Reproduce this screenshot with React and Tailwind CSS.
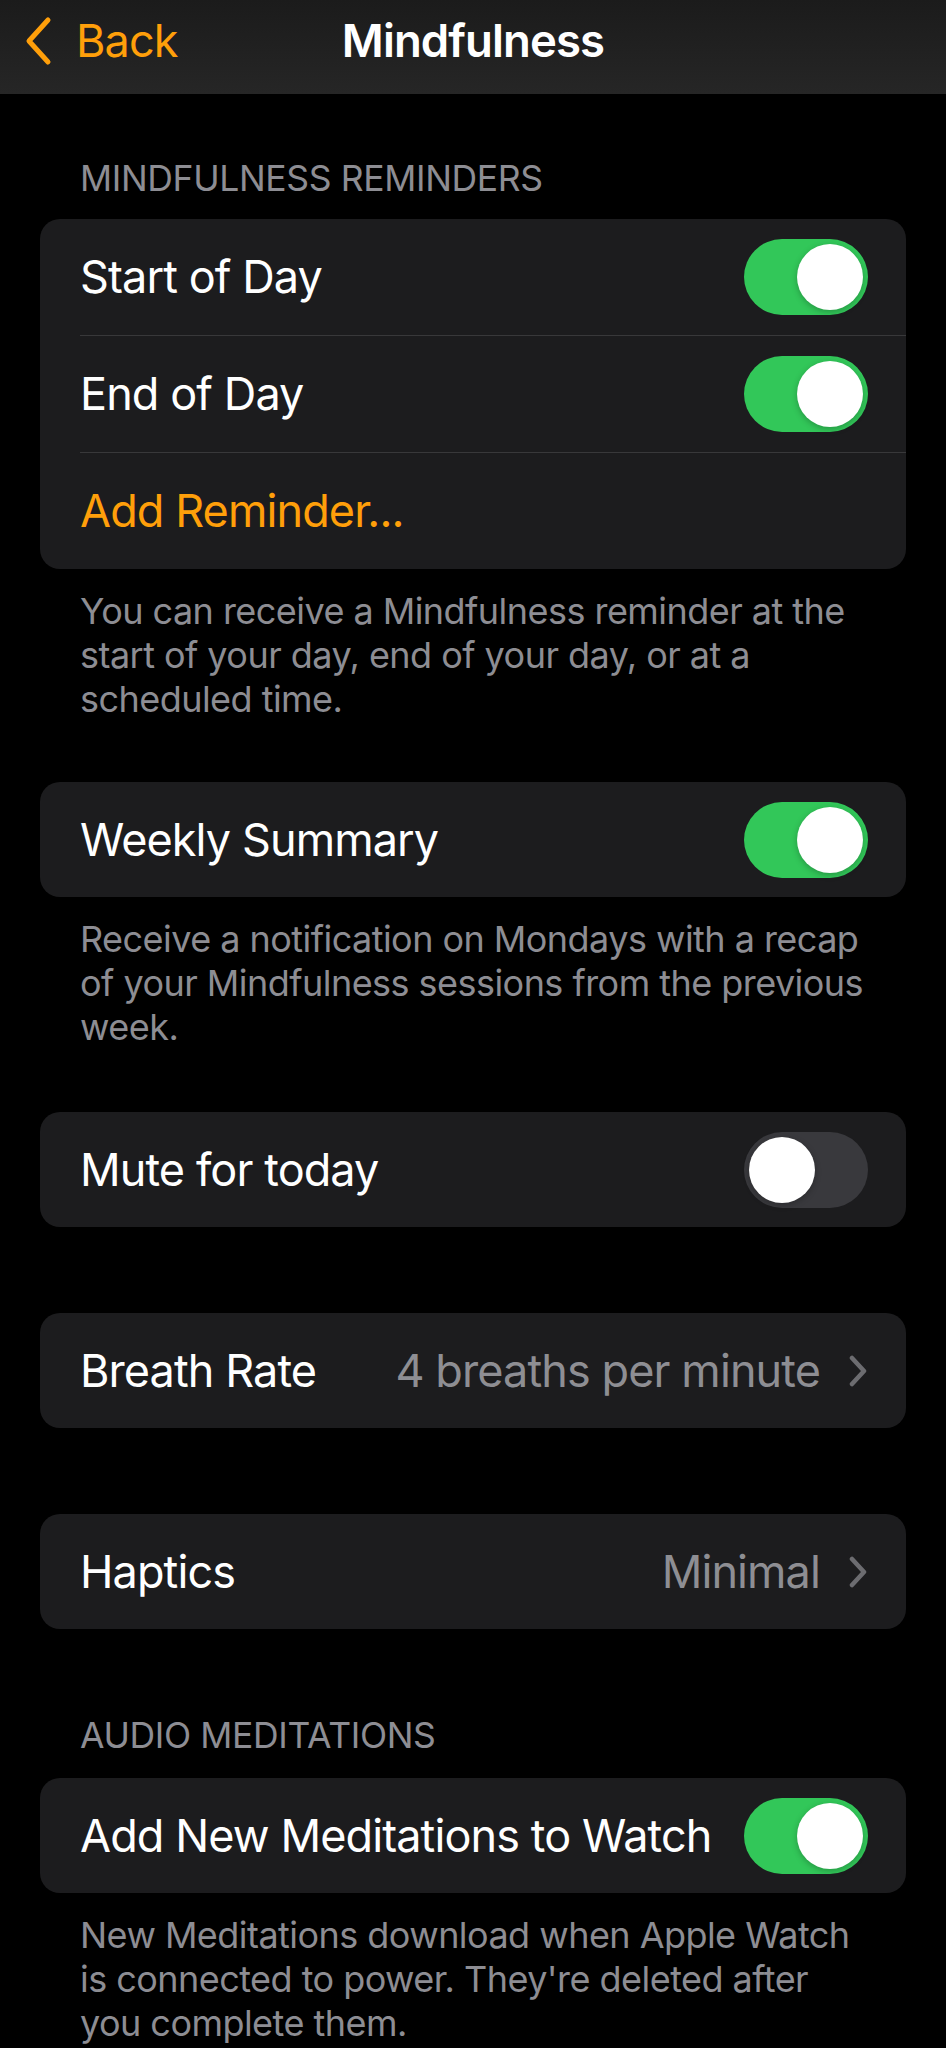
import React from "react";

const FONT = { fontFamily: "Inter, 'Noto Sans', 'Liberation Sans', sans-serif" };

function Toggle({ on }) {
  return (
    <div
      className={`relative h-[76px] w-[124px] shrink-0 rounded-full ${
        on ? "bg-[#32c759]" : "bg-[#39393d]"
      }`}
    >
      <div
        className={`absolute top-[5px] h-[66px] w-[66px] rounded-full bg-white shadow-[0_2px_6px_rgba(0,0,0,0.25)] ${
          on ? "right-[5px]" : "left-[5px]"
        }`}
      />
    </div>
  );
}

function Chevron() {
  return (
    <svg width="20" height="32" viewBox="0 0 20 32" className="shrink-0">
      <path
        d="M4 3 L16 16 L4 29"
        fill="none"
        stroke="#6c6c70"
        strokeWidth="4.5"
        strokeLinecap="round"
        strokeLinejoin="round"
      />
    </svg>
  );
}

function Row({ label, right, tint = "text-white", h = "h-[115px]" }) {
  return (
    <div className={`flex ${h} items-center justify-between pl-[40px] pr-[38px]`}>
      <span className={`text-[45px] tracking-[-0.02em] ${tint}`}>{label}</span>
      {right}
    </div>
  );
}

function Separator() {
  return <div className="ml-[40px] h-px bg-[#38383a]" />;
}

function Card({ children, className = "" }) {
  return (
    <div className={`mx-[40px] overflow-hidden rounded-[20px] bg-[#1c1c1e] ${className}`}>
      {children}
    </div>
  );
}

function Header({ children, className = "" }) {
  return (
    <div
      className={`px-[80px] text-[35.5px] leading-[40px] tracking-[-0.01em] text-[#8d8d93] ${className}`}
    >
      {children}
    </div>
  );
}

function Footer({ children, className = "" }) {
  return (
    <p
      className={`pl-[80px] pr-[72px] text-[36px] leading-[44px] tracking-[-0.015em] text-[#8d8d93] ${className}`}
    >
      {children}
    </p>
  );
}

function Value({ text }) {
  return (
    <div className="flex items-center gap-[28px]">
      <span className="text-[45px] tracking-[-0.02em] text-[#8e8e93]">{text}</span>
      <Chevron />
    </div>
  );
}

export default function App() {
  return (
    <div className="min-h-[2048px] w-[946px] overflow-hidden bg-black" style={FONT}>
      {/* navigation bar */}
      <div className="relative h-[94px] bg-gradient-to-b from-[#1b1b1b] to-[#262626]">
        <div className="flex h-[82px] items-center pl-[23px]">
          <svg width="30" height="50" viewBox="0 0 30 50" className="shrink-0">
            <path
              d="M25 4 L6 25 L25 46"
              fill="none"
              stroke="#ff9f0a"
              strokeWidth="5"
              strokeLinecap="round"
              strokeLinejoin="round"
            />
          </svg>
          <span className="ml-[23px] text-[45px] tracking-[-0.02em] text-[#ff9f0a]">Back</span>
        </div>
        <div className="absolute inset-x-0 top-0 flex h-[82px] items-center justify-center">
          <span className="text-[45.5px] font-semibold tracking-[-0.02em] text-white">
            Mindfulness
          </span>
        </div>
      </div>

      <Header className="mt-[65px]">MINDFULNESS REMINDERS</Header>
      <Card className="mt-[20px]">
        <Row label="Start of Day" h="h-[116px]" right={<Toggle on />} />
        <Separator />
        <Row label="End of Day" h="h-[116px]" right={<Toggle on />} />
        <Separator />
        <Row label="Add Reminder..." h="h-[116px]" tint="text-[#ff9f0a]" />
      </Card>
      <Footer className="mt-[20px]">
        You can receive a Mindfulness reminder at the start of your day, end of your day, or at a
        scheduled time.
      </Footer>

      <Card className="mt-[61px]">
        <Row label="Weekly Summary" right={<Toggle on />} />
      </Card>
      <Footer className="mt-[20px]">
        Receive a notification on Mondays with a recap of your Mindfulness sessions from the
        previous week.
      </Footer>

      <Card className="mt-[63px]">
        <Row label="Mute for today" right={<Toggle on={false} />} />
      </Card>

      <Card className="mt-[86px]">
        <Row label="Breath Rate" right={<Value text="4 breaths per minute" />} />
      </Card>

      <Card className="mt-[86px]">
        <Row label="Haptics" right={<Value text="Minimal" />} />
      </Card>

      <Header className="mt-[87px]">AUDIO MEDITATIONS</Header>
      <Card className="mt-[22px]">
        <Row label="Add New Meditations to Watch" right={<Toggle on />} />
      </Card>
      <Footer className="mt-[20px]">
        New Meditations download when Apple Watch is connected to power. They're deleted after
        you complete them.
      </Footer>
    </div>
  );
}
